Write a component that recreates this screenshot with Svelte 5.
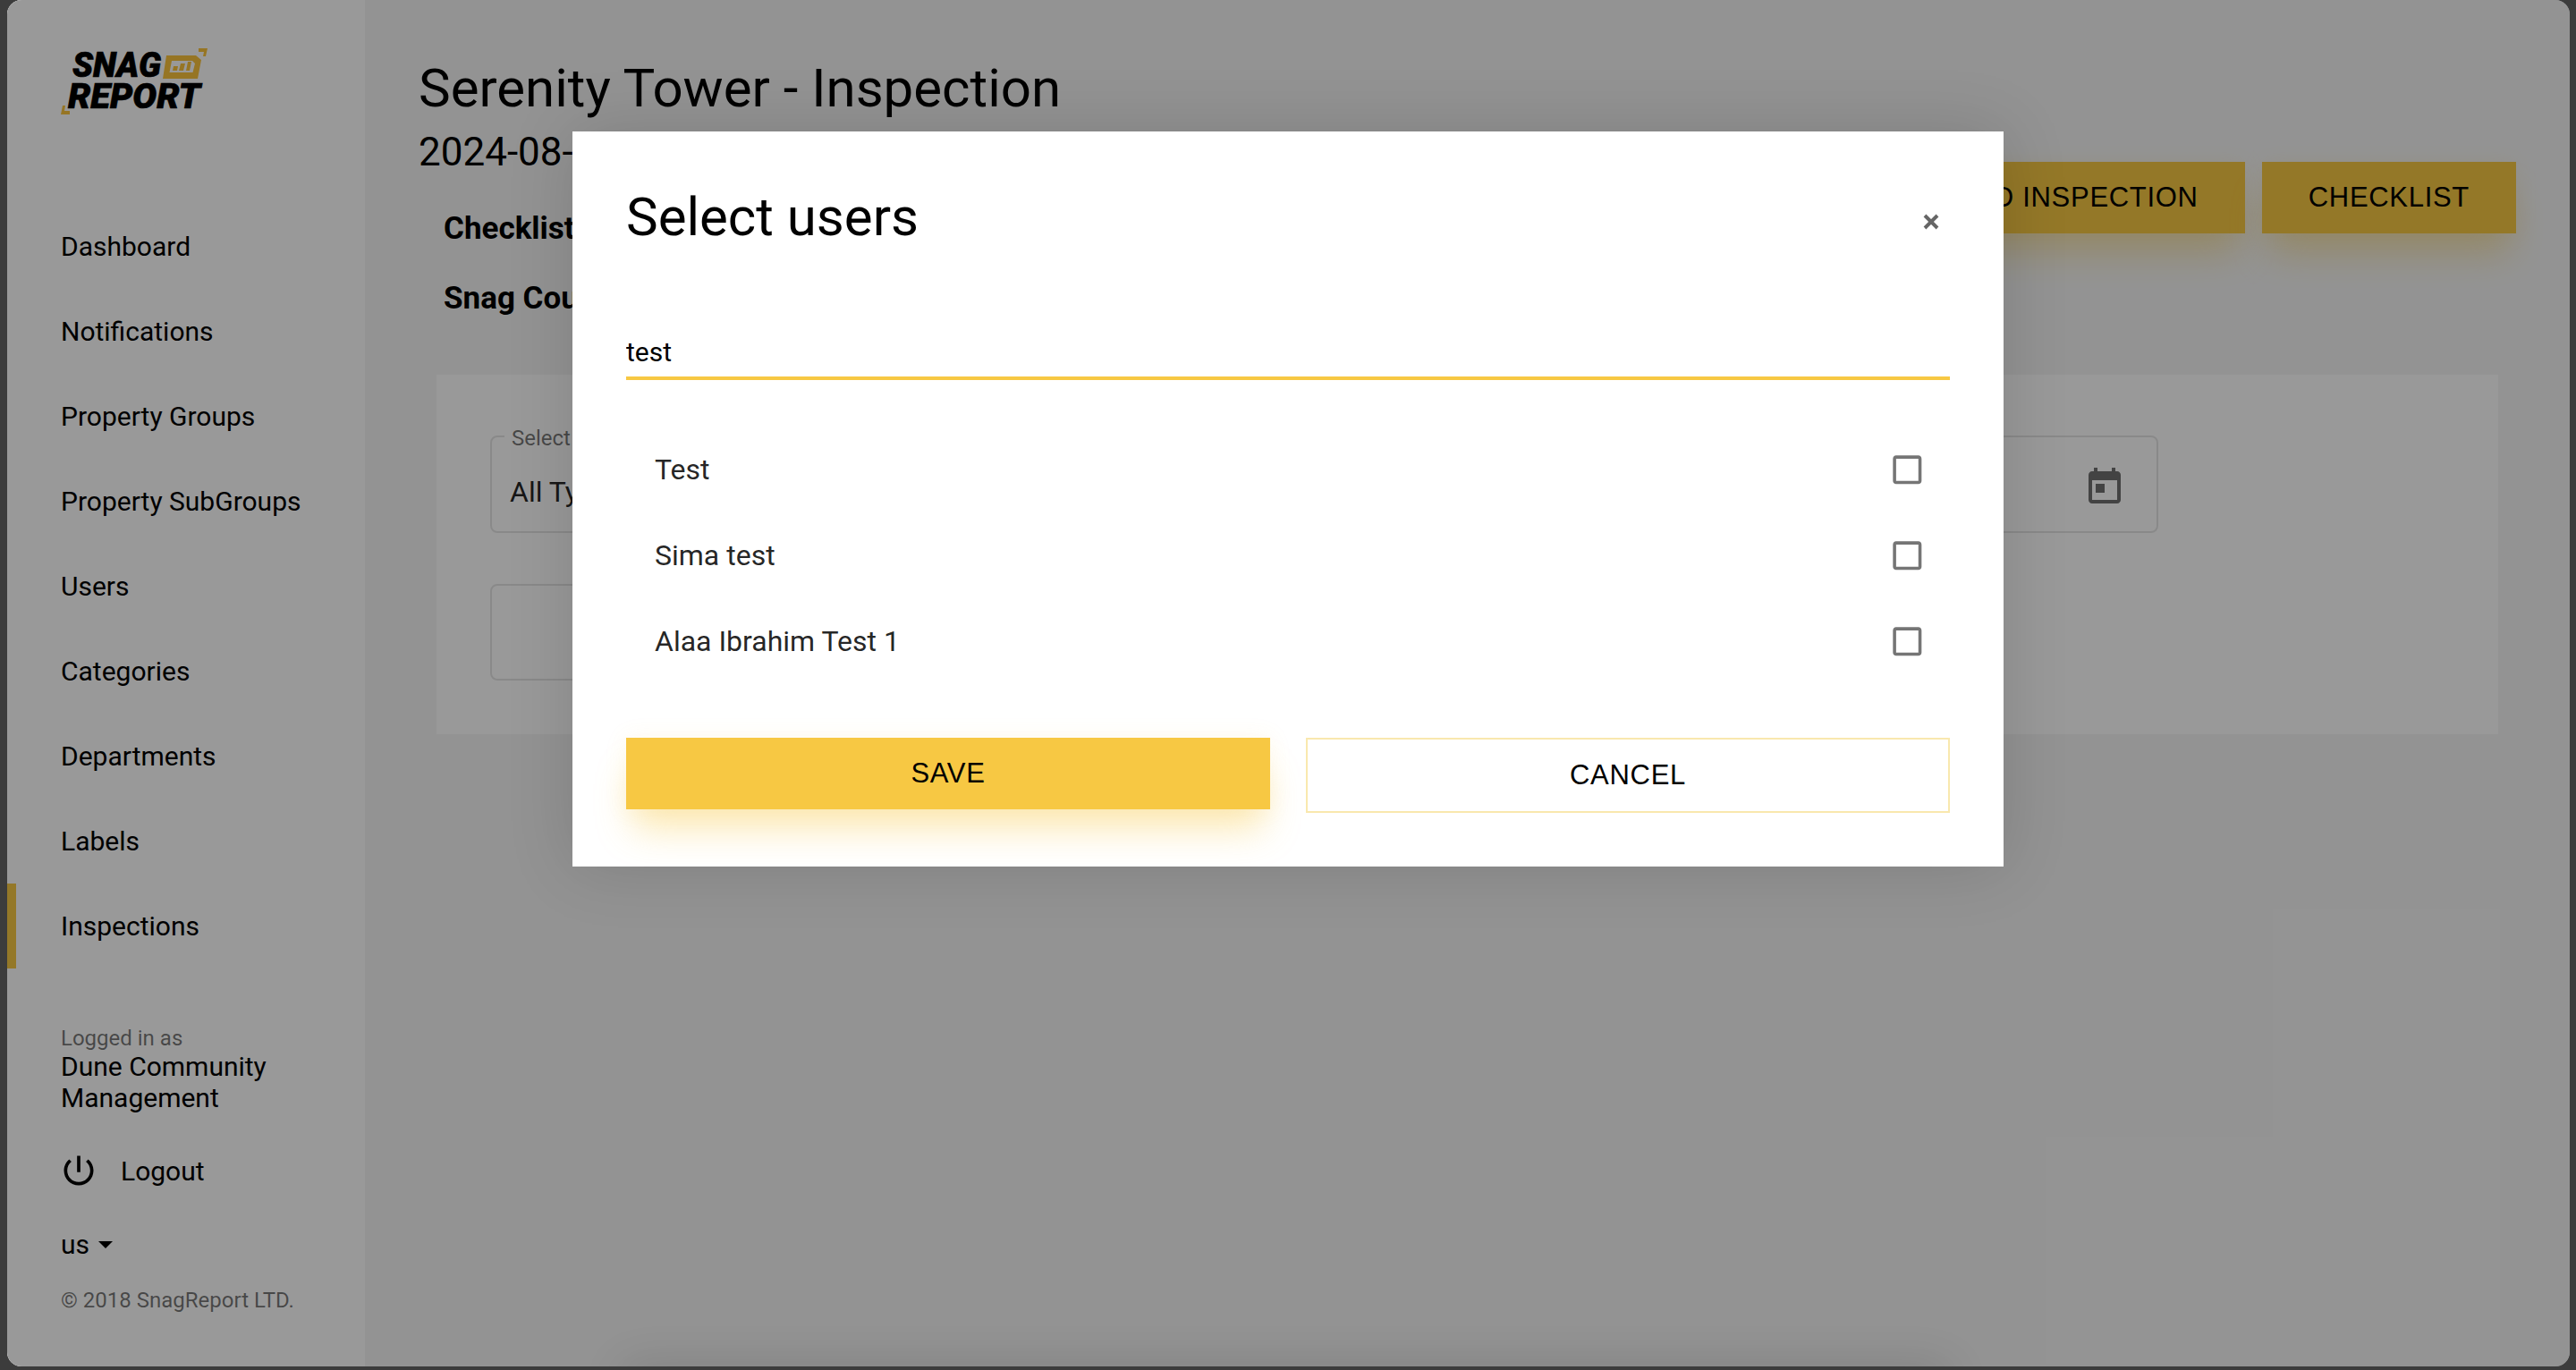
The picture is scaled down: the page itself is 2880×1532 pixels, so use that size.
<script>
  const nav = ['Dashboard','Notifications','Property Groups','Property SubGroups','Users','Categories','Departments','Labels','Inspections'];
  const users = ['Test','Sima test','Alaa Ibrahim Test 1'];
</script>

<div class="frame">
  <div class="window">
    <aside class="sidebar">
      <svg class="logo" width="164" height="74" viewBox="0 0 164 74" aria-label="SnagReport">
        <text x="13" y="32" class="lg" font-size="39" textLength="99" lengthAdjust="spacingAndGlyphs">SNAG</text>
        <text x="8" y="67" class="lg" font-size="38" textLength="148" lengthAdjust="spacingAndGlyphs">REPORT</text>
        <path fill-rule="evenodd" fill="#fbc43c" d="M118 8h33l6 5-4 21h-39zM124 14l-2.5 13h26l2.5-10-3-3z"/>
        <path fill="#fbc43c" d="M126 20h5l-1 5h-5zM134 17h5l-2 8h-5zM142 15h4l-2 10h-4zM154 0h10l-2 9h-3l1-5h-6zM2 64h3l-1 6h6v4H0z"/>
      </svg>
      <nav class="nav">
        {#each nav as item}
          <div class="nav-item" class:active={item === 'Inspections'}>{item}</div>
        {/each}
      </nav>
      <div class="logged">Logged in as</div>
      <div class="company">Dune Community<br />Management</div>
      <div class="logout">
        <svg width="44" height="44" viewBox="0 0 24 24"><path fill="#000" d="M13 3h-2v10h2V3zm4.83 2.17l-1.42 1.42C17.99 7.86 19 9.81 19 12c0 3.87-3.13 7-7 7s-7-3.13-7-7c0-2.19 1.01-4.14 2.58-5.42L6.17 5.17C4.23 6.82 3 9.26 3 12c0 4.97 4.03 9 9 9s9-4.03 9-9c0-2.74-1.23-5.18-3.17-6.83z"/></svg>
        <span>Logout</span>
      </div>
      <div class="lang">us<i class="caret"></i></div>
      <div class="copy">© 2018 SnagReport LTD.</div>
    </aside>

    <main class="main">
      <header class="head">
        <div>
          <h1>Serenity Tower - Inspection</h1>
          <div class="date">2024-08-12</div>
          <div class="stat first">Checklist</div>
          <div class="stat">Snag Count</div>
        </div>
        <div class="actions">
          <button class="btn primary">ADD INSPECTION</button>
          <button class="btn primary">CHECKLIST</button>
        </div>
      </header>
      <section class="card">
        <div class="row">
          <div class="field">
            <span class="legend">Select Type</span>
            <span class="value">All Types</span>
          </div>
          <div class="field date-field">
            <svg width="48" height="48" viewBox="0 0 24 24"><path fill="#707070" d="M19 3h-1V1h-2v2H8V1H6v2H5c-1.11 0-1.99.9-1.99 2L3 19c0 1.1.89 2 2 2h14c1.1 0 2-.9 2-2V5c0-1.1-.9-2-2-2zm0 16H5V8h14v11zM7 10h5v5H7z"/></svg>
          </div>
        </div>
        <div class="field wide"></div>
      </section>
    </main>

    <div class="backdrop"></div>
    <div class="edge-shadow"></div>

    <div class="modal">
      <div class="modal-head">
        <h2>Select users</h2>
        <svg class="close" width="20" height="20" viewBox="0 0 20 20"><path d="M3 3l14 14M17 3L3 17" stroke="#666" stroke-width="4" fill="none"/></svg>
      </div>
      <input class="search" value="test" />
      <div class="list">
        {#each users as u}
          <div class="user">
            <span>{u}</span>
            <svg width="42.67" height="42.67" viewBox="0 0 24 24"><path fill="#757575" d="M19 5v14H5V5h14m0-2H5c-1.1 0-2 .9-2 2v14c0 1.1.9 2 2 2h14c1.1 0 2-.9 2-2V5c0-1.1-.9-2-2-2z"/></svg>
          </div>
        {/each}
      </div>
      <div class="modal-foot">
        <button class="btn primary save">SAVE</button>
        <button class="btn cancel">CANCEL</button>
      </div>
    </div>
  </div>
</div>

<style>
  :global(body) { margin: 0; background: #3a3a3a; }
  .frame {
    height: 1532px;
    box-sizing: border-box;
    padding: 0 7px 4px 8px;
    background: #3c3c3c;
    font-family: Roboto, "Liberation Sans", sans-serif;
    color: #000;
  }
  .window {
    position: relative;
    height: 100%;
    display: flex;
    overflow: hidden;
    border-radius: 16px;
    background: #f6f6f6;
  }
  .sidebar {
    width: 400px;
    flex: none;
    box-sizing: border-box;
    padding: 54px 0 0 60px;
    background: #fff;
    font-size: 30px;
  }
  .logo { display: block; overflow: visible; }
  .lg { font-family: Roboto, sans-serif; font-weight: 900; font-style: italic; fill: #000; stroke: #000; stroke-width: .7px; }
  .nav { margin-top: 100px; margin-left: -60px; }
  .nav-item {
    position: relative;
    height: 95px;
    line-height: 95px;
    padding-left: 60px;
  }
  .nav-item.active::before {
    content: '';
    position: absolute;
    left: 0; top: 0; bottom: 0;
    width: 10px;
    background: #f7c843;
  }
  .logged { margin-top: 64px; font-size: 24px; line-height: 28px; color: rgba(0,0,0,.54); }
  .company { line-height: 35px; }
  .logout { margin-top: 39px; height: 50px; display: flex; align-items: center; gap: 25px; }
  .logout svg { margin-left: -2px; }
  .lang { margin-top: 38px; line-height: 40px; display: flex; align-items: center; }
  .caret { margin-left: 10px; border: 8px solid transparent; border-top-color: #000; border-bottom: 0; }
  .copy { margin-top: 28px; font-size: 24px; line-height: 28px; color: rgba(0,0,0,.54); }

  .main { flex: 1; min-width: 0; padding: 62px 60px 0; }
  .head { display: flex; justify-content: space-between; align-items: flex-start; }
  h1 { margin: 0; font-weight: 400; font-size: 60px; line-height: 74px; }
  .date { margin-top: 4px; font-size: 44px; line-height: 60px; }
  .stat { margin: 34px 0 0 28px; font-size: 35px; font-weight: 700; line-height: 44px; }
  .actions { display: flex; gap: 19px; margin-top: 119px; }
  .btn {
    height: 80px;
    padding: 0 52px;
    border: 0;
    border-radius: 0;
    font-family: "Liberation Sans", Arial, sans-serif;
    font-size: 31px;
    letter-spacing: .7px;
    color: #000;
  }
  .primary {
    background: #f7c843;
    box-shadow: 0 30px 40px -8px rgba(247,200,67,.4), 0 0 24px rgba(247,200,67,.1);
  }
  .card {
    margin: 63px 20px 0;
    padding: 68px 60px 60px;
    background: #fff;
  }
  .row { display: flex; gap: 20px; width: 1865px; }
  .field {
    position: relative;
    box-sizing: border-box;
    flex: 1;
    height: 109px;
    border: 2px solid rgba(0,0,0,.1);
    border-radius: 8px;
    display: flex;
    align-items: center;
    padding: 17px 20px 0;
  }
  .legend {
    position: absolute;
    left: 14px; top: -11px;
    padding: 0 8px;
    background: #fff;
    font-size: 24px;
    line-height: 24px;
    color: rgba(0,0,0,.54);
  }
  .value { font-size: 32px; color: rgba(0,0,0,.87); }
  .date-field { justify-content: flex-end; padding: 6px 34px 0 0; }
  .wide { margin-top: 57px; width: 1000px; height: 108px; flex: none; }

  .backdrop { position: absolute; inset: 0; background: rgba(0,0,0,.4); }
  .edge-shadow {
    position: absolute;
    left: 690px; width: 1480px; top: 1528px; height: 40px;
    box-shadow: 0 0 50px rgba(0,0,0,.14);
  }
  .modal {
    position: absolute;
    left: 632px; top: 147px;
    width: 1600px;
    box-sizing: border-box;
    padding: 60px;
    background: #fff;
    box-shadow: 0 0 70px rgba(0,0,0,.14);
  }
  .modal-head { display: flex; justify-content: space-between; align-items: center; height: 72px; }
  h2 { margin: 0; font-weight: 400; font-size: 60px; line-height: 72px; }
  .close { margin: 9px 11px 0 0; }
  .search {
    display: block;
    box-sizing: border-box;
    width: 100%;
    height: 60px;
    margin-top: 86px;
    padding: 0;
    border: 0;
    border-bottom: 4px solid #f7c843;
    outline: 0;
    background: transparent;
    font-family: inherit;
    font-size: 30px;
    color: #000;
  }
  .list { margin-top: 52px; }
  .user {
    height: 96px;
    display: flex;
    align-items: center;
    justify-content: space-between;
    padding: 0 26px 0 32px;
    font-size: 32px;
    color: rgba(0,0,0,.87);
  }
  .modal-foot { margin-top: 60px; display: grid; grid-template-columns: 1fr 1fr; gap: 40px; align-items: start; }
  .save { width: 100%; padding: 0; }
  .cancel { width: 100%; height: 84px; padding: 0; background: #fff; border: 2px solid #f9e8ae; }
</style>
